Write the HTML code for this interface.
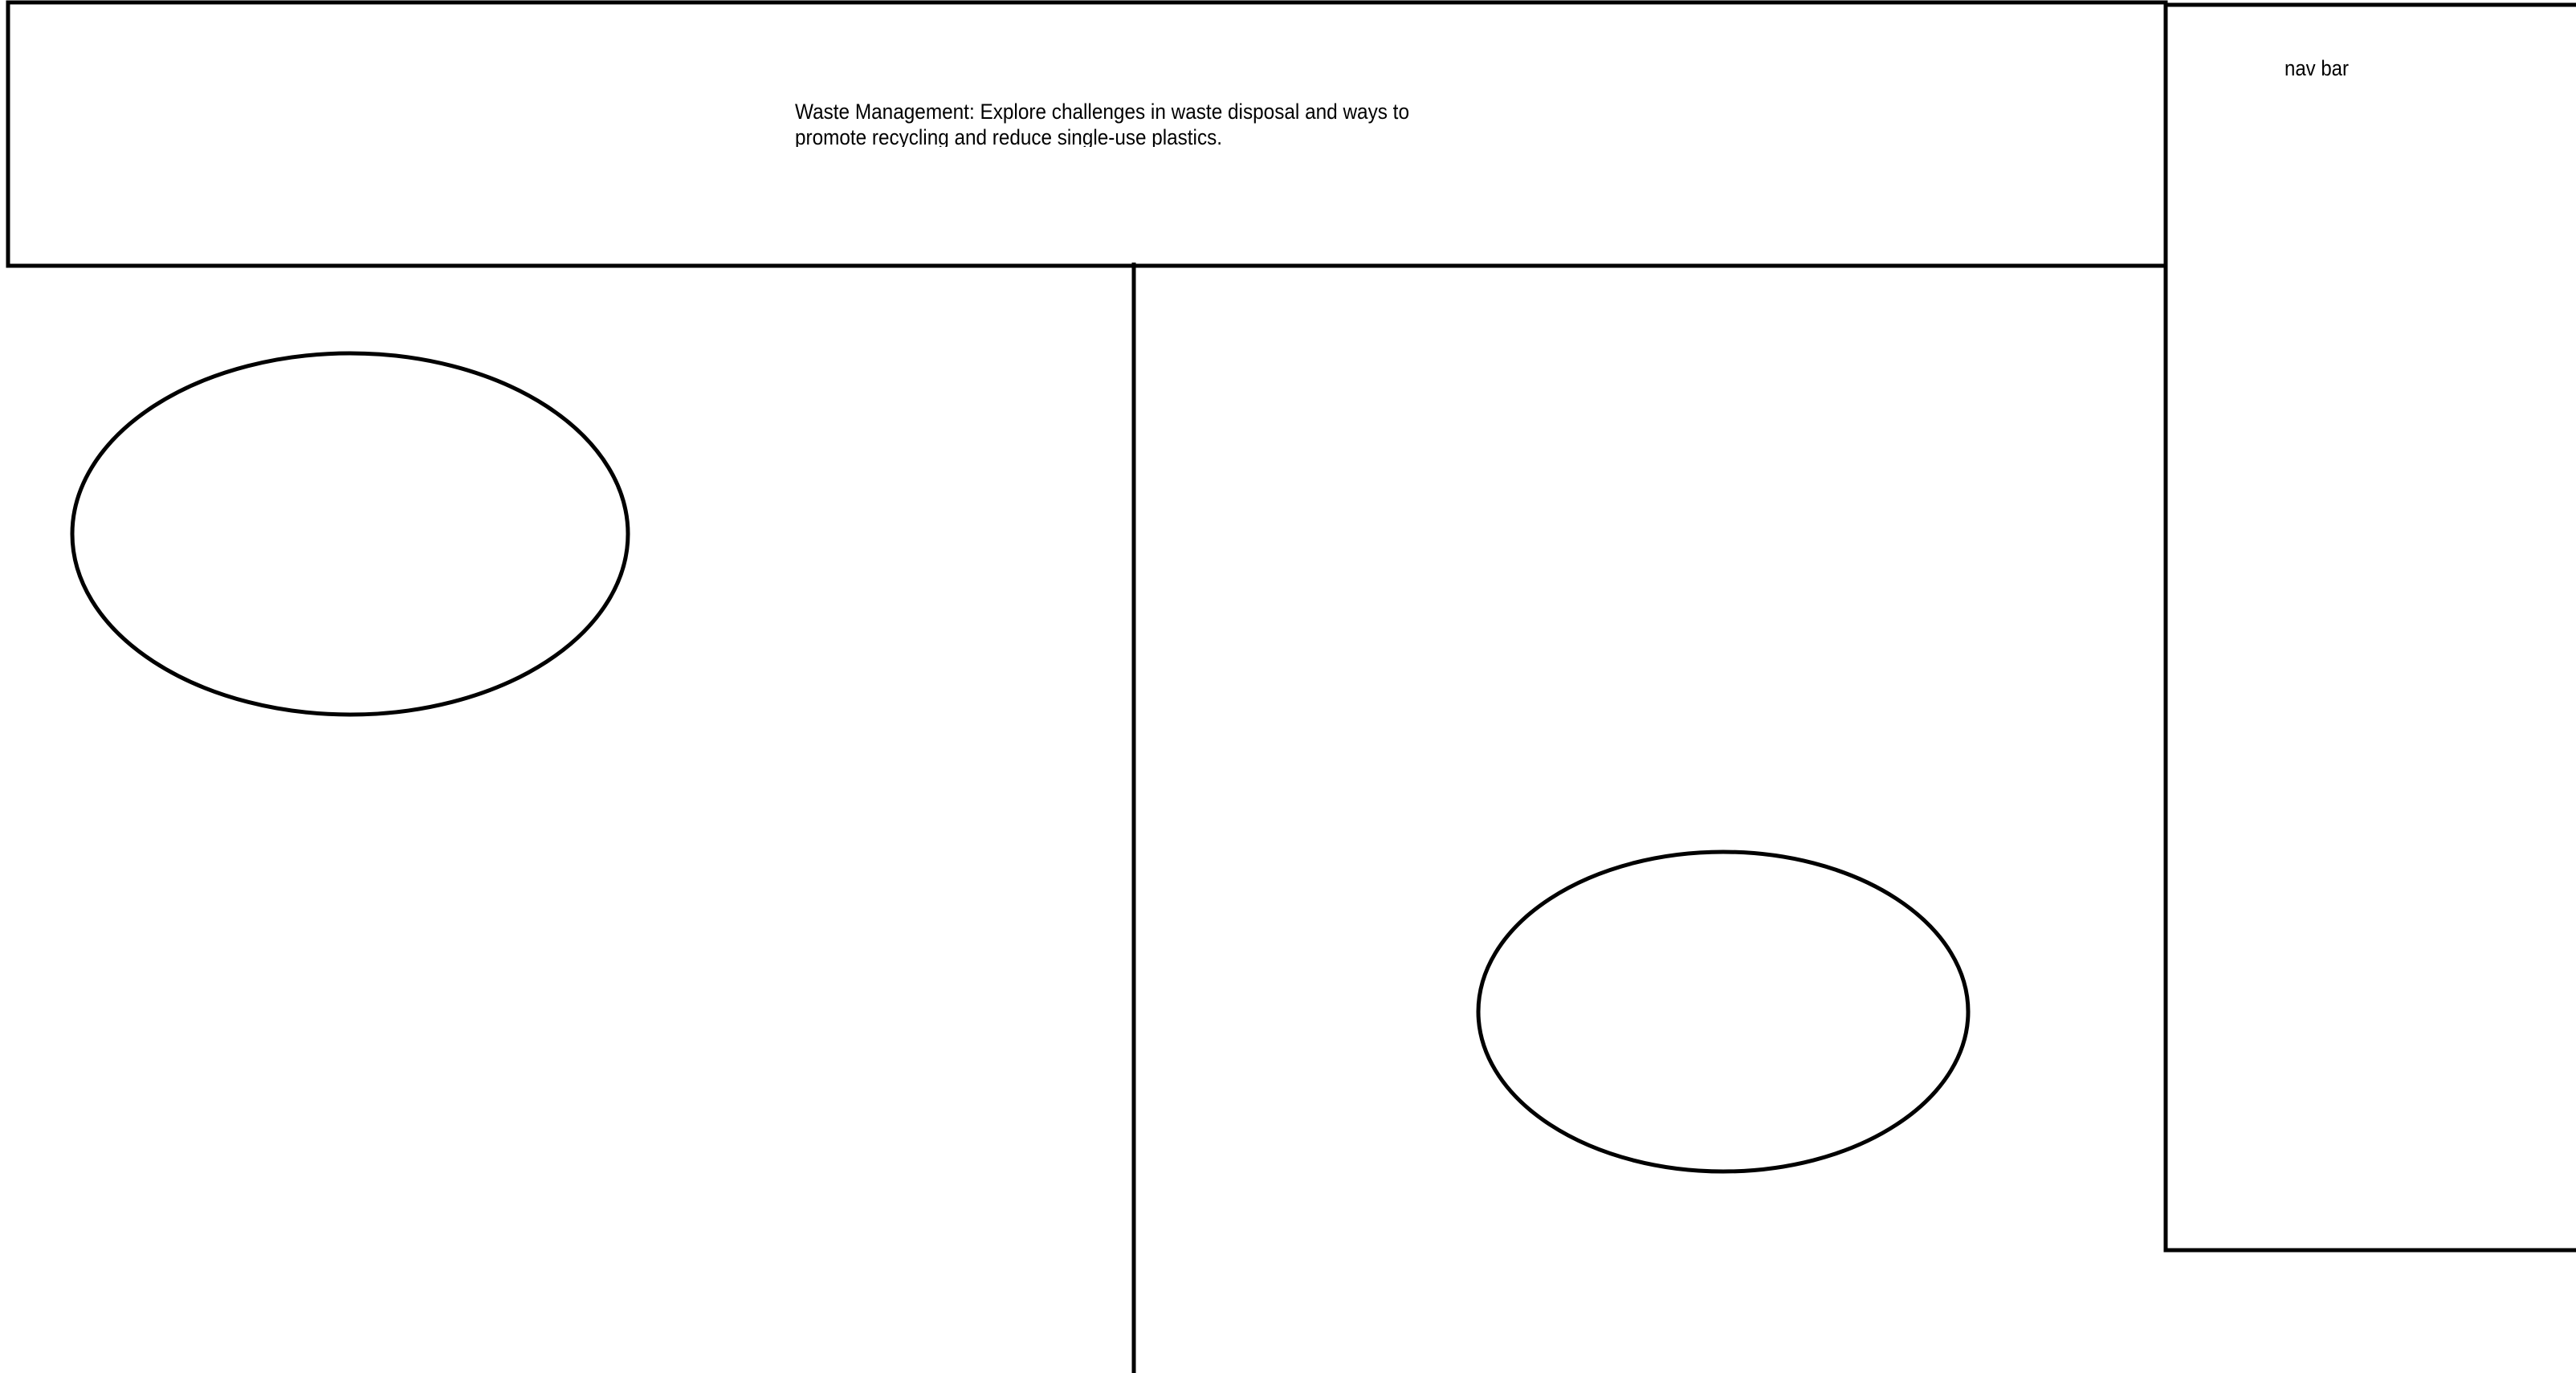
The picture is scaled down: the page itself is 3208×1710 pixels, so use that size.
<!DOCTYPE html>
<html><head><meta charset="utf-8"><style>
html,body{margin:0;padding:0;background:#fff;width:3208px;height:1710px;overflow:hidden}
svg{display:block}
text{font-family:"Liberation Sans",sans-serif;fill:#000}
</style></head><body>
<svg width="3208" height="1710" viewBox="0 0 3208 1710" xmlns="http://www.w3.org/2000/svg">
<defs><clipPath id="c"><rect x="0" y="0" width="2000" height="183"/></clipPath></defs>
<g fill="none" stroke="#000" stroke-width="5">
<rect x="10" y="3" width="2687" height="328"/>
<line x1="1412" y1="327" x2="1412" y2="1710"/>
<path d="M2697 1 V1557 H3210 M2697 6 H3210"/>
<ellipse cx="436" cy="665" rx="346" ry="225"/>
<ellipse cx="2146" cy="1260" rx="305" ry="199"/>
</g>
<text x="990" y="148" font-size="27" textLength="765" lengthAdjust="spacingAndGlyphs">Waste Management: Explore challenges in waste disposal and ways to</text>
<g clip-path="url(#c)"><text x="990" y="180" font-size="27" textLength="532" lengthAdjust="spacingAndGlyphs">promote recycling and reduce single-use plastics.</text></g>
<text x="2845" y="94" font-size="27" textLength="80" lengthAdjust="spacingAndGlyphs">nav bar</text>
</svg>
</body></html>
